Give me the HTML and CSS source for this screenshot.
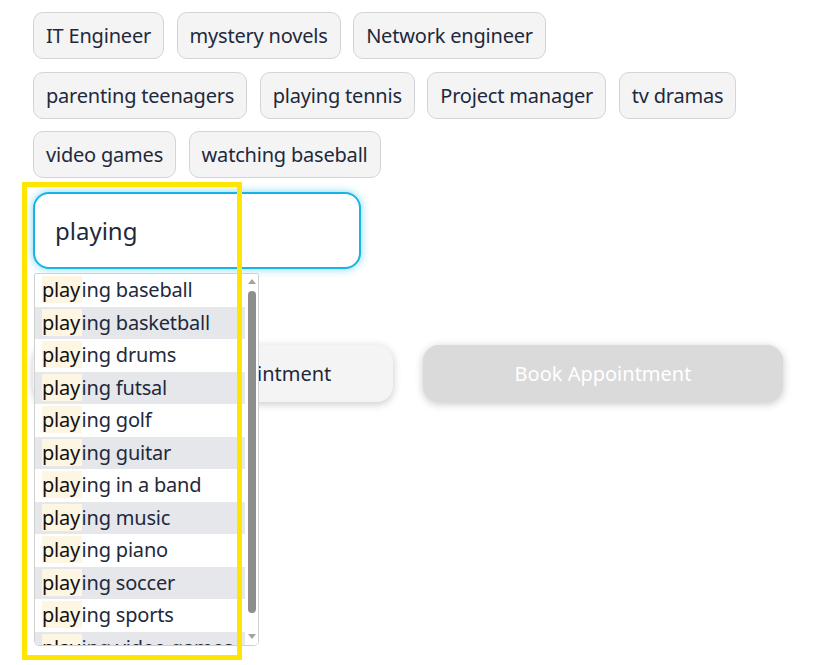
FILE: index.html
```html
<!DOCTYPE html>
<html lang="en">
<head>
<meta charset="utf-8">
<title>Interests</title>
<link rel="stylesheet" href="styles.css">
</head>
<body>
<div class="page">
  <div class="tags">
    <span class="tag">IT Engineer</span>
    <span class="tag">mystery novels</span>
    <span class="tag">Network engineer</span>
    <span class="tag">parenting teenagers</span>
    <span class="tag">playing tennis</span>
    <span class="tag">Project manager</span>
    <span class="tag">tv dramas</span>
    <span class="tag">video games</span>
    <span class="tag">watching baseball</span>
  </div>
  <div class="field">
    <input class="search" type="text" value="playing">
    <div class="suggest">
      <ul class="items">
        <li class="item"><mark>play</mark>ing baseball</li>
        <li class="item"><mark>play</mark>ing basketball</li>
        <li class="item"><mark>play</mark>ing drums</li>
        <li class="item"><mark>play</mark>ing futsal</li>
        <li class="item"><mark>play</mark>ing golf</li>
        <li class="item"><mark>play</mark>ing guitar</li>
        <li class="item"><mark>play</mark>ing in a band</li>
        <li class="item"><mark>play</mark>ing music</li>
        <li class="item"><mark>play</mark>ing piano</li>
        <li class="item"><mark>play</mark>ing soccer</li>
        <li class="item"><mark>play</mark>ing sports</li>
        <li class="item"><mark>play</mark>ing video games</li>
      </ul>
      <div class="scrollbar">
        <span class="arrow up"></span>
        <span class="thumb"></span>
        <span class="arrow down"></span>
      </div>
    </div>
  </div>
  <div class="actions">
    <button class="btn secondary">Reschedule Appointment</button>
    <button class="btn primary" disabled>Book Appointment</button>
  </div>
</div>
<div class="annot"></div>
</body>
</html>
```
FILE: styles.css
```css
html, body {
  margin: 0;
  padding: 0;
  background: #ffffff;
}
body {
  font-family: "Noto Sans", "Open Sans", sans-serif;
  color: #1e293b;
  width: 815px;
  height: 665px;
  overflow: hidden;
  position: relative;
}
.page {
  padding: 12px 32px 0 33px;
}
.tags {
  display: flex;
  flex-wrap: wrap;
  gap: 12.5px 12.5px;
  width: 720px;
}
.tag {
  display: inline-block;
  font-size: 20px;
  line-height: 29px;
  letter-spacing: -0.2px;
  padding: 8px 12px;
  border: 1px solid #d4d4d8;
  border-radius: 10px;
  background: #f4f4f5;
  white-space: nowrap;
}
.field {
  position: relative;
  margin-top: 14px;
  width: 328px;
}
.search {
  box-sizing: border-box;
  display: block;
  width: 328px;
  height: 77px;
  margin: 0;
  padding: 0 20px;
  border: 2px solid #18b4e6;
  border-radius: 16px;
  font-family: inherit;
  font-size: 24px;
  color: #1e293b;
  background: #fff;
  outline: none;
  box-shadow: 0 0 9px rgba(24, 180, 230, 0.55);
}
.suggest {
  position: absolute;
  left: 1px;
  top: calc(100% + 4px);
  width: 225px;
  height: 373px;
  box-sizing: border-box;
  border: 1px solid #d0d0d0;
  border-radius: 2px 2px 5px 5px;
  background: #fff;
  display: flex;
  overflow: hidden;
  z-index: 5;
}
.items {
  list-style: none;
  margin: 0;
  padding: 0;
  flex: 1;
  overflow: hidden;
}
.item {
  height: 32.5px;
  line-height: 32px;
  font-size: 20px;
  letter-spacing: -0.2px;
  padding: 0 7px;
  white-space: nowrap;
  overflow: hidden;
  background: #ffffff;
}
.item:nth-child(even) {
  background: #e5e7eb;
}
mark {
  background: #fdf6e2;
  color: #111111;
  padding-right: 1.5px;
}
.scrollbar {
  width: 13px;
  flex: none;
  display: flex;
  flex-direction: column;
  align-items: center;
  background: #ffffff;
}
.arrow {
  width: 0;
  height: 0;
  border-left: 4px solid transparent;
  border-right: 4px solid transparent;
}
.arrow.up {
  margin-top: 5px;
  border-bottom: 5px solid #a3a3a3;
}
.arrow.down {
  margin-top: 21px;
  border-top: 5px solid #a3a3a3;
}
.thumb {
  margin-top: 7px;
  width: 8px;
  height: 322px;
  border-radius: 4px;
  background: #8e8e8e;
}
.actions {
  margin-top: 76px;
  display: grid;
  grid-template-columns: 1fr 1fr;
  gap: 30px;
}
.btn {
  height: 57px;
  border: none;
  border-radius: 16px;
  font-family: inherit;
  font-size: 20px;
  box-shadow: 0 2px 8px rgba(0, 0, 0, 0.22);
}
.btn.secondary {
  background: #f4f4f5;
  color: #1e293b;
}
.btn.primary {
  background: #dadada;
  color: #ffffff;
}
.annot {
  position: absolute;
  left: 22px;
  top: 182px;
  width: 220px;
  height: 478px;
  box-sizing: border-box;
  border: 5px solid #ffe600;
  z-index: 10;
  pointer-events: none;
}
```
